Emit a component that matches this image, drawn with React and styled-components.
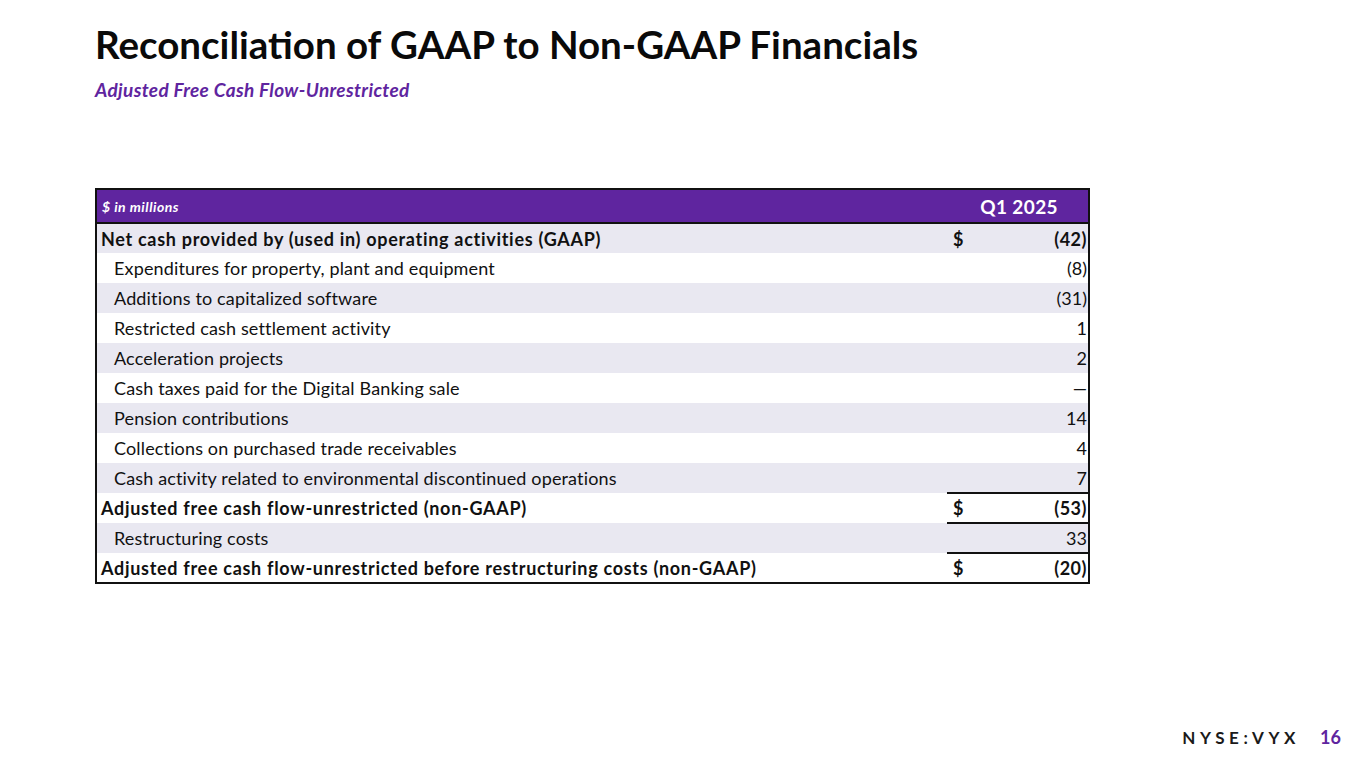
import React from 'react'
import styled, { createGlobalStyle } from 'styled-components'

const GlobalStyle = createGlobalStyle`
  html, body {
    margin: 0;
    padding: 0;
    background: #ffffff;
  }
  body {
    font-family: 'Lato', 'Open Sans', sans-serif;
    color: #111;
  }
`

const Slide = styled.div`
  position: relative;
  width: 1365px;
  height: 768px;
  box-sizing: border-box;
  padding: 21px 0 0 95px;
  overflow: hidden;
`

const Title = styled.h1`
  margin: 0;
  font-size: 38.5px;
  font-weight: 700;
  line-height: 46px;
  color: #0a0a0a;
`

const Subtitle = styled.h2`
  margin: 12px 0 0;
  font-size: 19px;
  font-style: italic;
  font-weight: 700;
  line-height: 22px;
  letter-spacing: 0.35px;
  color: #5f259f;
`

const Table = styled.table`
  margin-top: 87px;
  width: 995px;
  border-collapse: collapse;
  border: 2px solid #111;
  font-size: 18px;
`

const HeadCell = styled.th`
  background: #5f259f;
  color: #fff;
  height: 32px;
  padding: 0 ${({ $pad }) => $pad || 5}px 0 5px;
  text-align: ${({ $align }) => $align || 'left'};
  font-weight: 700;
  font-size: ${({ $small }) => ($small ? '14px' : '19px')};
  font-style: ${({ $small }) => ($small ? 'italic' : 'normal')};
  letter-spacing: ${({ $small }) => ($small ? '0.5px' : '0.4px')};
  border-bottom: 2px solid #111;
`

const Row = styled.tr`
  background: ${({ $shade }) => ($shade ? '#e9e8f1' : '#ffffff')};
  height: 30px;
`

const Label = styled.td`
  padding: 0 0 0 ${({ $indent }) => ($indent ? '17px' : '4px')};
  font-weight: ${({ $bold }) => ($bold ? 700 : 400)};
  letter-spacing: ${({ $bold }) => ($bold ? '0.7px' : '0.15px')};
  white-space: nowrap;
`

const Dollar = styled.td`
  width: 46px;
  padding: 0 0 0 6px;
  font-weight: 700;
  border-top: ${({ $rule }) => ($rule ? '2px solid #111' : 'none')};
`

const Value = styled.td`
  width: 88px;
  padding: 0 1px 0 0;
  text-align: right;
  font-weight: ${({ $bold }) => ($bold ? 700 : 400)};
  letter-spacing: ${({ $bold }) => ($bold ? '0.5px' : '0')};
  border-top: ${({ $rule }) => ($rule ? '2px solid #111' : 'none')};
`

const Footer = styled.div`
  position: absolute;
  right: 24px;
  bottom: 20px;
  display: flex;
  align-items: center;
  gap: 20px;
`

const Ticker = styled.span`
  font-size: 17px;
  font-weight: 700;
  letter-spacing: 4.6px;
  color: #1a1a1a;
`

const PageNum = styled.span`
  font-size: 18px;
  font-weight: 700;
  color: #5f259f;
`

const rows = [
  { label: 'Net cash provided by (used in) operating activities (GAAP)', value: '(42)', bold: true, dollar: true },
  { label: 'Expenditures for property, plant and equipment', value: '(8)' },
  { label: 'Additions to capitalized software', value: '(31)' },
  { label: 'Restricted cash settlement activity', value: '1' },
  { label: 'Acceleration projects', value: '2' },
  { label: 'Cash taxes paid for the Digital Banking sale', value: '—' },
  { label: 'Pension contributions', value: '14' },
  { label: 'Collections on purchased trade receivables', value: '4' },
  { label: 'Cash activity related to environmental discontinued operations', value: '7' },
  { label: 'Adjusted free cash flow-unrestricted (non-GAAP)', value: '(53)', bold: true, dollar: true, rule: true },
  { label: 'Restructuring costs', value: '33', rule: true },
  { label: 'Adjusted free cash flow-unrestricted before restructuring costs (non-GAAP)', value: '(20)', bold: true, dollar: true, rule: true },
]

export default function App() {
  return (
    <>
      <GlobalStyle />
      <Slide>
        <Title>Reconciliation of GAAP to Non-GAAP Financials</Title>
        <Subtitle>Adjusted Free Cash Flow-Unrestricted</Subtitle>
        <Table>
          <thead>
            <tr>
              <HeadCell $small>$ in millions</HeadCell>
              <HeadCell colSpan={2} $align="right" $pad={30}>Q1 2025</HeadCell>
            </tr>
          </thead>
          <tbody>
            {rows.map((r, i) => (
              <Row key={r.label} $shade={i % 2 === 0}>
                <Label $bold={r.bold} $indent={!r.bold}>{r.label}</Label>
                <Dollar $rule={r.rule}>{r.dollar ? '$' : ''}</Dollar>
                <Value $bold={r.bold} $rule={r.rule}>{r.value}</Value>
              </Row>
            ))}
          </tbody>
        </Table>
        <Footer>
          <Ticker>NYSE:VYX</Ticker>
          <PageNum>16</PageNum>
        </Footer>
      </Slide>
    </>
  )
}
